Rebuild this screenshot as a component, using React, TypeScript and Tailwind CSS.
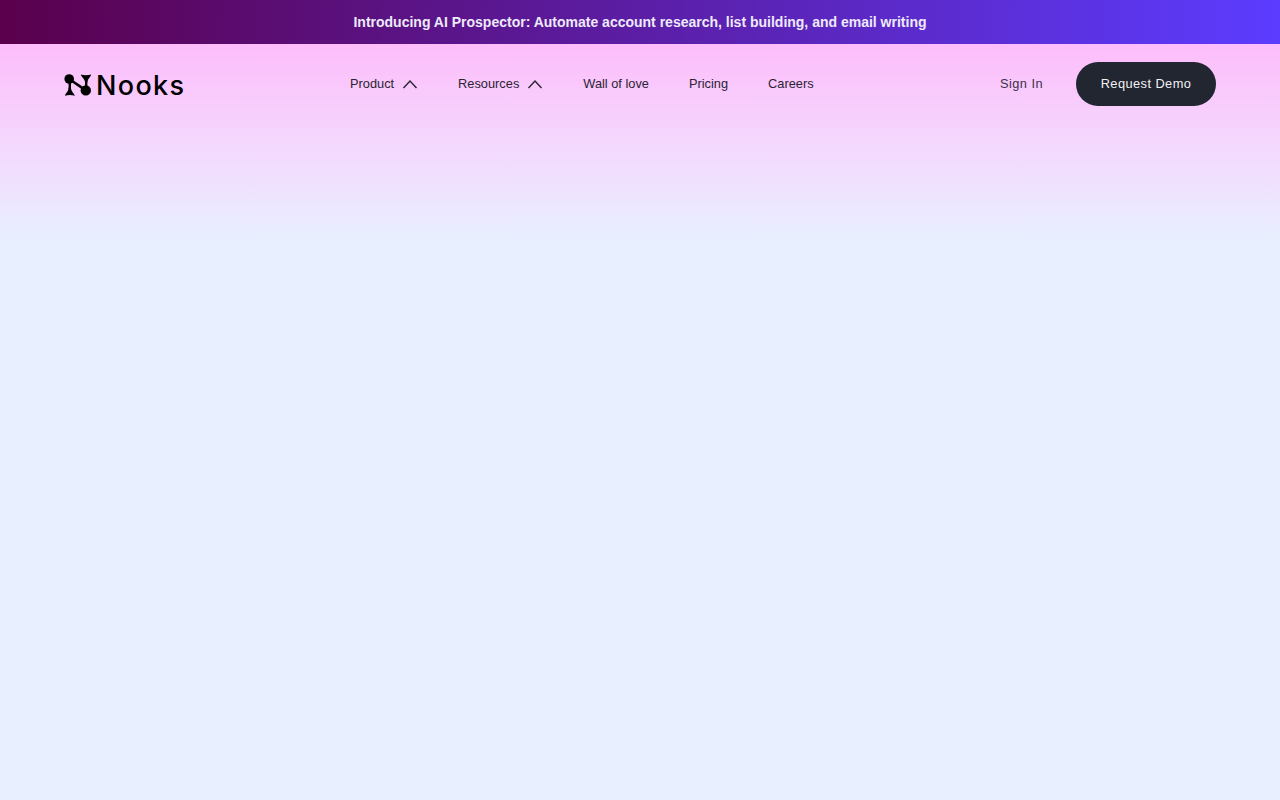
function NooksMark() {
  return (
    <svg width="28" height="23" viewBox="0 0 28 23" className="text-black">
      <circle cx="5.2" cy="6" r="4.8" fill="currentColor" />
      <circle cx="21.8" cy="17.4" r="5.2" fill="currentColor" />
      <path d="M5.2 6 L21.8 17.4" stroke="currentColor" strokeWidth="2.6" fill="none" />
      <path d="M5.8 7 L5.8 17 M22.2 6 L22.2 15" stroke="currentColor" strokeWidth="2.4" fill="none" />
      <path d="M1 22.8 C1.6 19.6 4.4 19 4.7 14.5 L6.9 14.5 C7.2 19 10 19.6 10.8 22.8 C7.6 21.8 4.2 21.8 1 22.8 Z" fill="currentColor" />
      <path d="M16.8 1.4 C20 2.4 23.6 2.4 27.2 1.4 C26.4 4.6 23.6 5.2 23.3 9.5 L21.1 9.5 C20.8 5.2 17.6 4.6 16.8 1.4 Z" fill="currentColor" />
    </svg>
  );
}

function Caret() {
  return (
    <svg width="16" height="16" viewBox="0 0 16 16" fill="none" stroke="currentColor" strokeWidth="1.4">
      <path d="M1.5 12 L8 5 L14.5 12" />
    </svg>
  );
}

function NavItem({ label, open }: { label: string; open?: boolean }) {
  return (
    <a href="#" className="flex h-4 items-center gap-2 text-[12.8px] leading-4 text-[#2a2433]">
      <span>{label}</span>
      {open && <Caret />}
    </a>
  );
}

export default function App() {
  return (
    <div className="min-h-screen bg-[#e8efff] font-['Liberation_Sans',Arial,sans-serif]">
      <div className="flex h-11 items-center justify-center bg-[linear-gradient(92deg,#5a004c,#5c3cff)]">
        <a href="#" className="text-sm font-bold text-[#eeeafb]">
          Introducing AI Prospector: Automate account research, list building, and email writing
        </a>
      </div>
      <div className="h-[196px] bg-gradient-to-b from-[#fdbdfb] to-[#e8efff]">
        <header className="flex h-20 items-center pr-16 pl-16">
          <a href="#" className="flex w-[286px] items-center gap-1">
            <NooksMark />
            <span className="pt-0.5 font-['Inter',sans-serif] text-[27px] leading-none font-medium tracking-[0.05em] text-black">Nooks</span>
          </a>
          <nav className="flex items-center gap-10">
            <NavItem label="Product" open />
            <NavItem label="Resources" open />
            <NavItem label="Wall of love" />
            <NavItem label="Pricing" />
            <NavItem label="Careers" />
          </nav>
          <div className="ml-auto flex items-center gap-[33px]">
            <a href="#" className="text-[12.8px] tracking-[0.035em] text-[#3b3349]">Sign In</a>
            <a href="#" className="flex h-11 w-[140px] items-center justify-center rounded-full bg-[#212631] text-[12.8px] tracking-[0.035em] text-[#f2f2f5]">
              Request Demo
            </a>
          </div>
        </header>
      </div>
    </div>
  );
}
